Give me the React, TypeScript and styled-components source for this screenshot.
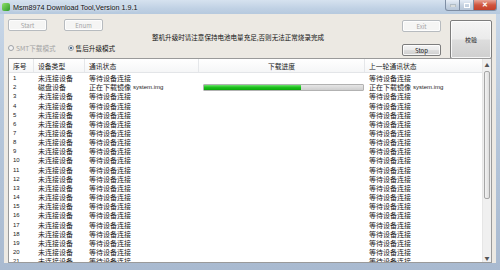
import styled, { createGlobalStyle } from "styled-components";

const GlobalStyle = createGlobalStyle`
  html, body {
    margin: 0;
    padding: 0;
    background: #9fb1c6;
  }
  * { box-sizing: border-box; }
`;

const CJK = `"Noto Sans CJK SC", "Liberation Sans", sans-serif`;

const Window = styled.div`
  width: 500px;
  height: 270px;
  display: flex;
  flex-direction: column;
  overflow: hidden;
  background: linear-gradient(180deg, #c9d8e9 0%, #b7c8dc 40%, #a9bad0 100%);
  font-family: ${CJK};
  color: #1b1b1b;
`;

const TitleBar = styled.div`
  height: 14px;
  display: flex;
  align-items: center;
  padding-left: 2px;
  background: linear-gradient(180deg, #d6e2ef 0%, #c0d1e4 60%, #b6c9de 100%);
`;

const AppIcon = styled.div`
  width: 8px;
  height: 8px;
  border-radius: 2px;
  background: linear-gradient(135deg, #8ee06a, #2f9a2a);
  margin-right: 3px;
`;

const TitleText = styled.div`
  font-family: "Liberation Sans", sans-serif;
  font-size: 7.2px;
  color: #111;
  flex: 1;
  text-shadow: 0 0 3px #fff;
`;

const Controls = styled.div`
  display: flex;
  align-self: flex-start;
  margin-right: 3px;
`;

const CtlBtn = styled.div<{ $close?: boolean; $w: number }>`
  width: ${(p) => p.$w}px;
  height: 11px;
  border: 1px solid #7e8ea4;
  border-top: none;
  margin-left: -1px;
  background: ${(p) =>
    p.$close
      ? "linear-gradient(180deg, #e8a597 0%, #d0553e 50%, #c4402a 100%)"
      : "linear-gradient(180deg, #e7eef7 0%, #c9d5e3 50%, #b7c6d8 100%)"};
  border-radius: ${(p) => (p.$close ? "0 0 3px 0" : "0")};
  display: flex;
  align-items: center;
  justify-content: center;
  color: #fff;
  font-family: "Liberation Sans", sans-serif;
  font-size: 7px;
  font-weight: bold;
  &:first-child { border-radius: 0 0 0 3px; }
`;

const Client = styled.div`
  flex: 1;
  margin: 0 4px 7px 4px;
  background: #ece9e3;
  display: flex;
  flex-direction: column;
  padding: 0 4px 0 4px;
`;

const TopPanel = styled.div`
  height: 44px;
  display: flex;
`;

const LeftGroup = styled.div`
  width: 144px;
  display: flex;
  flex-direction: column;
  padding-top: 5px;
`;

const ButtonRow = styled.div`
  display: flex;
  gap: 17px;
`;

const Button = styled.div<{ $disabled?: boolean; $w?: number; $h?: number }>`
  width: ${(p) => p.$w ?? 39}px;
  height: ${(p) => p.$h ?? 12}px;
  border: 1px solid ${(p) => (p.$disabled ? "#b7bbbf" : "#7d7d7d")};
  border-radius: 2px;
  background: ${(p) =>
    p.$disabled
      ? "#f5f5f4"
      : "linear-gradient(180deg, #f4f4f4 0%, #ebebeb 48%, #dddddd 52%, #cfcfcf 100%)"};
  color: ${(p) => (p.$disabled ? "#a4a4a4" : "#1a1a1a")};
  font-family: ${CJK};
  font-size: 6px;
  display: flex;
  align-items: center;
  justify-content: center;
  box-shadow: inset 0 0 0 1px rgba(255, 255, 255, 0.8);
`;

const RadioRow = styled.div`
  display: flex;
  align-items: center;
  margin-top: 12px;
  gap: 12px;
`;

const Radio = styled.div<{ $disabled?: boolean }>`
  display: flex;
  align-items: center;
  gap: 2px;
  font-size: 6.6px;
  color: ${(p) => (p.$disabled ? "#a3a3a3" : "#161616")};
`;

const RadioDot = styled.div<{ $checked?: boolean }>`
  width: 6px;
  height: 6px;
  border-radius: 50%;
  border: 1px solid #9ea3a8;
  background: ${(p) =>
    p.$checked
      ? "radial-gradient(circle, #4c6f94 0 1.4px, #f0f3f6 1.6px)"
      : "#f3f3f3"};
`;

const Message = styled.div`
  flex: 1;
  padding-top: 18px;
  font-size: 6.55px;
  color: #111;
  white-space: nowrap;
`;

const RightGroup = styled.div`
  display: flex;
  gap: 9px;
  padding-top: 6px;
`;

const StackCol = styled.div`
  display: flex;
  flex-direction: column;
  gap: 12px;
`;

const List = styled.div`
  height: 205px;
  border: 1px solid #9a9a9a;
  background: #fff;
  display: flex;
  overflow: hidden;
`;

const ListBody = styled.div`
  flex: 1;
  display: flex;
  flex-direction: column;
  overflow: hidden;
`;

const HeaderRow = styled.div`
  height: 14px;
  flex-shrink: 0;
  display: flex;
  align-items: center;
  background: linear-gradient(180deg, #ffffff 0%, #f5f6f7 100%);
  border-bottom: 1px solid #e3e5e8;
  margin-bottom: 1px;
  font-size: 6.8px;
`;

const Row = styled.div`
  height: 9.16px;
  flex-shrink: 0;
  display: flex;
  align-items: center;
  font-size: 7px;
  line-height: 9px;
`;

const Cell = styled.div<{ $w: number; $center?: boolean; $head?: boolean }>`
  width: ${(p) => p.$w}px;
  flex-shrink: 0;
  height: 100%;
  display: flex;
  align-items: center;
  justify-content: ${(p) => (p.$center ? "center" : "flex-start")};
  padding-left: ${(p) => (p.$center ? 0 : 4)}px;
  white-space: nowrap;
  overflow: hidden;
  border-right: ${(p) => (p.$head ? "1px solid #e5e7ea" : "none")};
`;

const Latin = styled.span<{ $gap?: number }>`
  font-family: "Liberation Sans", sans-serif;
  font-size: 6px;
  margin-left: ${(p) => p.$gap ?? 2}px;
`;

const ProgressTrack = styled.div`
  width: 161px;
  height: 7px;
  border: 1px solid #b2b2b2;
  border-radius: 1px;
  background: linear-gradient(180deg, #e6e6e6, #cfcfcf);
  overflow: hidden;
`;

const ProgressFill = styled.div`
  height: 100%;
  background: linear-gradient(180deg, #6fe36f 0%, #1fc21f 45%, #0aa80a 100%);
`;

const ScrollBar = styled.div`
  width: 9px;
  flex-shrink: 0;
  background: #f0f0f0;
  border-left: 1px solid #e6e6e6;
  display: flex;
  flex-direction: column;
`;

const ScrollArrow = styled.div`
  height: 10px;
  flex-shrink: 0;
  display: flex;
  align-items: center;
  justify-content: center;
  font-size: 5px;
  color: #555;
`;

const ScrollThumb = styled.div`
  height: 128px;
  flex-shrink: 0;
  margin: 2px 1px 0 1px;
  border: 1px solid #a6a6a6;
  border-radius: 2px;
  background: linear-gradient(90deg, #f3f3f3, #dedede);
`;

const Spacer = styled.div`
  flex: 1;
`;

const cols = [25, 51, 114, 166, 120];

type RowData = {
  type: string;
  status: string;
  file?: string;
  progress?: number;
};

const rows: RowData[] = Array.from({ length: 21 }, (_, i) =>
  i === 1
    ? { type: "磁盘设备", status: "正在下载镜像", file: "system.img", progress: 61 }
    : { type: "未连接设备", status: "等待设备连接" }
);

export default function App() {
  return (
    <>
      <GlobalStyle />
      <Window>
        <TitleBar>
          <AppIcon />
          <TitleText>Msm8974 Download Tool,Version 1.9.1</TitleText>
          <Controls>
            <CtlBtn $w={15}>
              <svg width="6" height="3" viewBox="0 0 6 3">
                <rect x="0" y="1" width="6" height="2" fill="#fff" stroke="#455" strokeWidth="0.4" />
              </svg>
            </CtlBtn>
            <CtlBtn $w={15}>
              <svg width="6" height="5" viewBox="0 0 6 5">
                <rect x="0.5" y="0.5" width="5" height="4" fill="none" stroke="#fff" strokeWidth="1" />
              </svg>
            </CtlBtn>
            <CtlBtn $w={24} $close>
              ✕
            </CtlBtn>
          </Controls>
        </TitleBar>
        <Client>
          <TopPanel>
            <LeftGroup>
              <ButtonRow>
                <Button $disabled>Start</Button>
                <Button $disabled>Enum</Button>
              </ButtonRow>
              <RadioRow>
                <Radio $disabled>
                  <RadioDot />
                  SMT下载模式
                </Radio>
                <Radio>
                  <RadioDot $checked />
                  售后升级模式
                </Radio>
              </RadioRow>
            </LeftGroup>
            <Message>整机升级时请注意保持电池电量充足,否则无法正常烧录完成</Message>
            <RightGroup>
              <StackCol>
                <Button $disabled>Exit</Button>
                <Button>Stop</Button>
              </StackCol>
              <Button $w={42} $h={39}>
                校验
              </Button>
            </RightGroup>
          </TopPanel>
          <List>
            <ListBody>
              <HeaderRow>
                <Cell $w={cols[0]} $head>序号</Cell>
                <Cell $w={cols[1]} $head>设备类型</Cell>
                <Cell $w={cols[2]} $head>通讯状态</Cell>
                <Cell $w={cols[3]} $head $center>下载进度</Cell>
                <Cell $w={cols[4]} $head>上一轮通讯状态</Cell>
              </HeaderRow>
              {rows.map((r, i) => (
                <Row key={i}>
                  <Cell $w={cols[0]}>
                    <Latin $gap={0}>{i + 1}</Latin>
                  </Cell>
                  <Cell $w={cols[1]}>{r.type}</Cell>
                  <Cell $w={cols[2]}>
                    {r.status}
                    {r.file && <Latin>{r.file}</Latin>}
                  </Cell>
                  <Cell $w={cols[3]}>
                    {r.progress !== undefined && (
                      <ProgressTrack>
                        <ProgressFill style={{ width: `${r.progress}%` }} />
                      </ProgressTrack>
                    )}
                  </Cell>
                  <Cell $w={cols[4]}>
                    {r.status}
                    {r.file && <Latin>{r.file}</Latin>}
                  </Cell>
                </Row>
              ))}
            </ListBody>
            <ScrollBar>
              <ScrollArrow>▲</ScrollArrow>
              <ScrollThumb />
              <Spacer />
              <ScrollArrow>▼</ScrollArrow>
            </ScrollBar>
          </List>
        </Client>
      </Window>
    </>
  );
}
